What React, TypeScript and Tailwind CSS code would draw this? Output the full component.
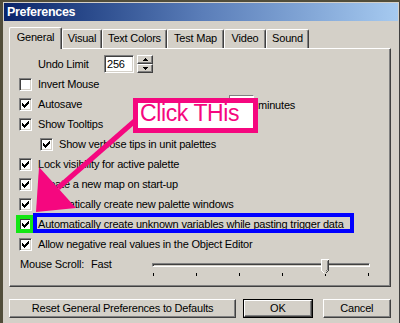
import React from "react";

const FACE = "#d4d0c8";

function Check() {
  const px: [number, number][] = [
    [3, 5], [3, 6], [3, 7],
    [4, 6], [4, 7], [4, 8],
    [5, 7], [5, 8], [5, 9],
    [6, 6], [6, 7], [6, 8],
    [7, 5], [7, 6], [7, 7],
    [8, 4], [8, 5], [8, 6],
    [9, 3], [9, 4], [9, 5],
  ];
  return (
    <svg width="13" height="13" viewBox="0 0 13 13" className="absolute left-[-1px] top-[-1px]" shapeRendering="crispEdges">
      {px.map(([x, y], i) => (
        <rect key={i} x={x} y={y} width="1" height="1" fill="#000" />
      ))}
    </svg>
  );
}

function Checkbox({ checked }: { checked: boolean }) {
  return (
    <div className="relative w-[13px] h-[13px] shrink-0 bg-white border border-t-[#808080] border-l-[#808080] border-b-white border-r-white shadow-[inset_1px_1px_0_#404040,inset_-1px_-1px_0_#d4d0c8]">
      {checked && <Check />}
    </div>
  );
}

function CheckRow({ checked, label, indent = false }: { checked: boolean; label: string; indent?: boolean }) {
  return (
    <div className={`flex items-start h-[20px] pt-[3px] ${indent ? "pl-[21px]" : ""}`}>
      <Checkbox checked={checked} />
      <span className="ml-[6px] leading-[13px] whitespace-nowrap">{label}</span>
    </div>
  );
}

function Tab({ label, w, selected = false }: { label: string; w: string; selected?: boolean }) {
  return (
    <div
      className={`${w} ${selected ? "h-[22px] z-10 pt-[3px]" : "mt-[2px] h-[19px] pt-[2px]"} relative flex justify-center bg-[#d4d0c8] border-l border-t border-l-white border-t-white border-r border-r-[#404040] rounded-tl-[2px] rounded-tr-[2px] shadow-[inset_-1px_0_0_#808080] leading-[13px] whitespace-nowrap`}
    >
      {label}
    </div>
  );
}

function Raised({ className, children }: { className: string; children?: React.ReactNode }) {
  return (
    <div className={`${className} bg-[#d4d0c8] border border-t-white border-l-white border-r-[#404040] border-b-[#404040] shadow-[inset_-1px_-1px_0_#808080] flex items-center justify-center`}>
      {children}
    </div>
  );
}

export default function App() {
  return (
    <div
      className="relative w-[400px] h-[323px] overflow-hidden bg-[#514d3a] text-[11px] tracking-[-0.2px] text-black"
      style={{ fontFamily: '"Liberation Sans", Arial, sans-serif' }}
    >
      {/* window */}
      <div className="ml-[3px] mt-[2px] w-[397px] h-[330px] bg-[#d4d0c8] p-[1px] border-r border-r-[#404040]">
        {/* title bar */}
        <div className="h-[18px] w-[394px] bg-gradient-to-r from-[#0a246a] via-[#5a7db8] to-[#a6caf0] flex items-center pl-[3px]">
          <span className="text-white font-bold text-[12.5px] tracking-[-0.3px] leading-[14px]">Preferences</span>
        </div>

        {/* body */}
        <div className="pl-[5px] pr-[7px] pt-[6px]">
          {/* tabs */}
          <div className="flex items-start h-[21px]">
            <Tab label="General" w="w-[53px]" selected />
            <Tab label="Visual" w="w-[40px]" />
            <Tab label="Text Colors" w="w-[65px]" />
            <Tab label="Test Map" w="w-[57px]" />
            <Tab label="Video" w="w-[42px]" />
            <Tab label="Sound" w="w-[43px]" />
          </div>

          {/* panel */}
          <div className="h-[239px] w-[382px] border border-t-white border-l-white border-r-[#404040] border-b-[#404040] shadow-[inset_-1px_-1px_0_#808080] pl-[9px] pt-[6px]">
            {/* Undo limit */}
            <div className="flex items-center h-[18px] mb-[2px]">
              <span className="w-[85px] shrink-0 pl-[19px] leading-[13px] whitespace-nowrap">Undo Limit</span>
              <div className="w-[30px] h-[18px] bg-white border border-t-[#808080] border-l-[#808080] border-b-white border-r-white shadow-[inset_1px_1px_0_#404040,inset_-1px_-1px_0_#d4d0c8] pl-[2px] pt-[2px] leading-[13px]">
                256
              </div>
              <div className="ml-[3px] w-[16px] h-[18px] flex flex-col">
                <Raised className="w-[16px] h-[9px]">
                  <svg width="5" height="3" viewBox="0 0 5 3" shapeRendering="crispEdges">
                    <path d="M2 0h1v1h1v1h1v1H0V2h1V1h1z" fill="#000" />
                  </svg>
                </Raised>
                <Raised className="w-[16px] h-[9px]">
                  <svg width="5" height="3" viewBox="0 0 5 3" shapeRendering="crispEdges">
                    <path d="M0 0h5v1H4v1H3v1H2V2H1V1H0z" fill="#000" />
                  </svg>
                </Raised>
              </div>
            </div>

            <CheckRow checked={false} label="Invert Mouse" />
            <div className="flex items-start h-[20px]">
              <div className="w-[210px] shrink-0 pt-[3px] flex items-start">
                <Checkbox checked />
                <span className="ml-[6px] leading-[13px]">Autosave</span>
              </div>
              <div className="w-[25px] h-[18px] bg-white border border-t-[#808080] border-l-[#808080] border-b-white border-r-white" />
              <span className="ml-[4px] pt-[4px] leading-[13px]">minutes</span>
            </div>
            <CheckRow checked label="Show Tooltips" />
            <CheckRow checked indent label="Show verbose tips in unit palettes" />
            <CheckRow checked label="Lock visibility for active palette" />
            <CheckRow checked label="Create a new map on start-up" />
            <CheckRow checked label="Automatically create new palette windows" />
            <CheckRow checked label="Automatically create unknown variables while pasting trigger data" />
            <CheckRow checked label="Allow negative real values in the Object Editor" />

            {/* mouse scroll */}
            <div className="flex items-start h-[24px]">
              <span className="ml-[1px] mt-[3px] leading-[13px] whitespace-nowrap">Mouse Scroll:</span>
              <span className="ml-[7px] mt-[3px] leading-[13px]">Fast</span>
              <div className="ml-[40px] w-[220px] relative pt-[8px]">
                <div className="h-[4px] w-[218px] border-t border-l border-t-[#808080] border-l-[#808080] border-b border-r border-b-white border-r-white shadow-[inset_1px_1px_0_#404040]" />
                <div className="flex justify-between w-[216px] ml-[1px] mt-[6px]">
                  {[0, 1, 2, 3, 4, 5].map((i) => (
                    <div key={i} className="w-[1px] h-[3px] bg-black" />
                  ))}
                </div>
                <svg width="8" height="15" viewBox="0 0 8 15" className="absolute left-[169px] top-[4px]" shapeRendering="crispEdges">
                  <path d="M0 0H8V11L4 15L0 11Z" fill={FACE} />
                  <path d="M0 11V0H7" stroke="#fff" fill="none" strokeWidth="1" transform="translate(0.5 0.5)" />
                  <path d="M7 0V11L4 14" stroke="#404040" fill="none" strokeWidth="1" transform="translate(0.5 0.5)" />
                  <path d="M6 1V10L4 12" stroke="#808080" fill="none" strokeWidth="1" transform="translate(0.5 0.5)" />
                  <path d="M0 11L3 14" stroke="#fff" fill="none" strokeWidth="1" transform="translate(0.5 0.5)" />
                </svg>
              </div>
            </div>
          </div>

          {/* buttons */}
          <div className="flex mt-[12px]">
            <Raised className="w-[229px] h-[19px]">
              <span className="leading-[13px]">Reset General Preferences to Defaults</span>
            </Raised>
            <div className="ml-[7px] w-[70px] h-[19px] border border-black">
              <Raised className="w-full h-full">
                <span className="leading-[13px]">OK</span>
              </Raised>
            </div>
            <Raised className="ml-[10px] w-[69px] h-[19px]">
              <span className="leading-[13px]">Cancel</span>
            </Raised>
          </div>
        </div>
      </div>

      {/* annotations */}
      <div className="absolute left-[16px] top-[215px] w-[18px] h-[18px] border-[4px] border-[#14e614]" />
      <div className="absolute left-[33px] top-[213px] w-[321px] h-[20px] border-[4px] border-[#0000ff]" />
      <svg className="absolute left-0 top-0 pointer-events-none" width="400" height="323" viewBox="0 0 400 323">
        <line x1="137" y1="119" x2="58" y2="188" stroke="#f5077f" strokeWidth="5" />
        <polygon points="39,167 76,208 36,212" fill="#f5077f" />
      </svg>
      <div className="absolute left-[133px] top-[98px] w-[125px] h-[35px] border-[5px] border-[#f5077f] bg-white pl-[2px]">
        <span className="block text-[23px] tracking-[-0.4px] leading-[23px] text-[#f5077f] -mt-[1px]">Click THis</span>
      </div>
    </div>
  );
}
